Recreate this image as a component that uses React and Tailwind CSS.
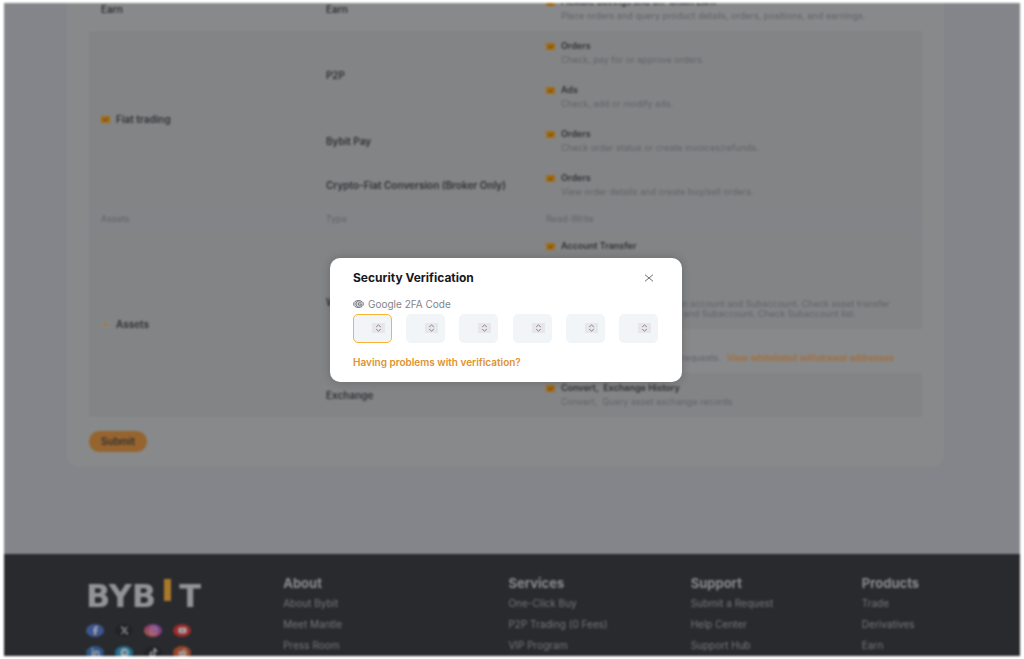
import React from 'react';
import { FaFacebookF, FaXTwitter, FaInstagram, FaYoutube, FaLinkedinIn, FaTelegram, FaTiktok, FaRedditAlien } from 'react-icons/fa6';

const DESC = 'mt-[2px] pl-[15px] text-[9px] leading-[10px] text-[#616369]';

const socials = [
    { name: 'Facebook', Icon: FaFacebookF, bg: 'bg-[#3f558f]' },
    { name: 'X', Icon: FaXTwitter, bg: 'bg-[#222326]' },
    { name: 'Instagram', Icon: FaInstagram, bg: 'bg-linear-to-tr from-[#a5642c] via-[#96386f] to-[#5c3f9c]' },
    { name: 'YouTube', Icon: FaYoutube, bg: 'bg-[#9c2b2b]' },
    { name: 'LinkedIn', Icon: FaLinkedinIn, bg: 'bg-[#2f5484]' },
    { name: 'Telegram', Icon: FaTelegram, bg: 'bg-[#1f6c90]' },
    { name: 'TikTok', Icon: FaTiktok, bg: 'bg-[#222326]' },
    { name: 'Reddit', Icon: FaRedditAlien, bg: 'bg-[#974628]' },
];

const footerColumns = [
    { title: 'About', links: ['About Bybit', 'Meet Mantle', 'Press Room'] },
    { title: 'Services', links: ['One-Click Buy', 'P2P Trading (0 Fees)', 'VIP Program'] },
    { title: 'Support', links: ['Submit a Request', 'Help Center', 'Support Hub'] },
    { title: 'Products', links: ['Trade', 'Derivatives', 'Earn'] },
];

const CheckLabel = ({ children, partial, size = 'text-[10px]' }) => (
    <label className={`flex items-center gap-[6px] leading-[14px] font-semibold text-[#303135] ${size}`}>
        <span className="grid shrink-0">
            <input
                type="checkbox"
                defaultChecked={!partial}
                className={`col-start-1 row-start-1 h-[7px] w-[9px] appearance-none rounded-[1px] ${partial ? 'bg-[#868788]' : 'bg-[#a36c14]'}`}
            />
            <svg viewBox="0 0 9 7" className="pointer-events-none col-start-1 row-start-1 h-[7px] w-[9px]" fill="none">
                {partial ? (
                    <path d="M2 3.5h5" stroke="#b07413" strokeWidth="1.6" />
                ) : (
                    <path d="M2.4 3.4l1.700 1.500 2.600-2.800" stroke="#4c3a1a" strokeWidth="1" />
                )}
            </svg>
        </span>
        {children}
    </label>
);

const Permission = ({ title, children, className = '' }) => (
    <td className={`px-3 pt-2 pb-[10px] align-top whitespace-nowrap ${className}`}>
        <CheckLabel size="text-[9px]">{title}</CheckLabel>
        <p className={`min-h-[10px] ${DESC}`}>{children}</p>
    </td>
);

const TypeCell = ({ children, rowSpan }) => (
    <td rowSpan={rowSpan} className="px-3 text-[10px] leading-[14px] font-semibold text-[#303135]">{children}</td>
);

const PermissionTable = () => (
    <table className="w-full table-fixed border-collapse bg-[#838485] text-left">
        <colgroup>
            <col className="w-[27%]" />
            <col className="w-[220px]" />
            <col />
        </colgroup>
        <tbody>
            <tr className="bg-[#88898a]">
                <TypeCell>Earn</TypeCell>
                <TypeCell>Earn</TypeCell>
                <Permission title="Flexible Savings and On-Chain Earn">
                    Place orders and query product details, orders, positions, and earnings.
                </Permission>
            </tr>
            <tr>
                <td rowSpan={4} className="px-3"><CheckLabel>Fiat trading</CheckLabel></td>
                <TypeCell rowSpan={2}>P2P</TypeCell>
                <Permission title="Orders">Check, pay for or approve orders.</Permission>
            </tr>
            <tr>
                <Permission title="Ads">Check, add or modify ads.</Permission>
            </tr>
            <tr>
                <TypeCell>Bybit Pay</TypeCell>
                <Permission title="Orders">Check order status or create invoices/refunds.</Permission>
            </tr>
            <tr>
                <TypeCell>Crypto-Fiat Conversion (Broker Only)</TypeCell>
                <Permission title="Orders">View order details and create buy/sell orders.</Permission>
            </tr>
            <tr className="h-6 bg-[#838488] text-[9px] leading-[10px] text-[#616369]">
                <th className="px-3 font-normal">Assets</th>
                <th className="px-3 font-normal">Type</th>
                <th className="px-3 font-normal">Read-Write</th>
            </tr>
            <tr>
                <td rowSpan={4} className="px-3"><CheckLabel partial>Assets</CheckLabel></td>
                <TypeCell rowSpan={3}>Wallet</TypeCell>
                <Permission title="Account Transfer" />
            </tr>
            <tr>
                <Permission title="Subaccount Transfer">
                    Asset transfers between Main account and Subaccount. Check asset transfer
                    <br />
                    records of the Main account and Subaccount. Check Subaccount list.
                </Permission>
            </tr>
            <tr>
                <Permission title="Withdrawal" className="bg-[#88898a]">
                    API can process withdrawal requests.
                    <a href="#addresses" className="ml-[6px] font-medium text-[#a8692c]">View whitelisted withdrawal addresses</a>
                </Permission>
            </tr>
            <tr>
                <TypeCell>Exchange</TypeCell>
                <Permission title="Convert,&nbsp; Exchange History">Convert,&nbsp; Query asset exchange records</Permission>
            </tr>
        </tbody>
    </table>
);

const Footer = () => (
    <footer className="grid min-h-0 flex-1 grid-cols-[197fr_225fr_182fr_171fr_158fr] overflow-hidden bg-[#292a2e] pt-[22px] pl-[82px] text-[#8b8c8f]">
        <div>
            <div className="flex items-start font-['DejaVu_Sans'] text-[32px] leading-[40px] font-bold text-[#929396]">
                <span>BYB</span>
                <span className="mx-2 mt-[3px] h-[22px] w-[7px] bg-[#a9782a]" />
                <span>T</span>
            </div>
            <div className="mt-2 flex w-[120px] flex-wrap gap-x-[11px] gap-y-[9px]">
                {socials.map(({ name, Icon, bg }) => (
                    <a
                        key={name}
                        href={`#${name}`}
                        aria-label={name}
                        className={`flex h-[13px] w-[18px] items-center justify-center rounded-[50%] text-[9px] text-[#a5a6a9] ${bg}`}
                    >
                        <Icon />
                    </a>
                ))}
            </div>
        </div>
        {footerColumns.map((col) => (
            <nav key={col.title}>
                <h4 className="text-[13px] leading-[14px] font-bold">{col.title}</h4>
                <ul className="mt-[3px] text-[10px] leading-[21px] text-[#77787c]">
                    {col.links.map((link) => (
                        <li key={link}><a href="#footer">{link}</a></li>
                    ))}
                </ul>
            </nav>
        ))}
    </footer>
);

const CodeInput = ({ index }) => (
    <div
        className={`flex h-[29px] w-[39px] items-center justify-end rounded-[5px] border bg-[#f2f5f8] pr-[6px] ${
            index === 0 ? 'border-[#f9b437]' : 'border-[#f2f5f8]'
        }`}
    >
        <input inputMode="numeric" maxLength={1} aria-label={`Digit ${index + 1}`} className="w-0 flex-1 bg-transparent text-center text-xs outline-none" />
        <svg viewBox="0 0 13 10" className="h-[10px] w-[13px] shrink-0 bg-[#e7e6ea]" fill="none" stroke="#85868d" strokeWidth="1">
            <path d="M4.2 3.9L6.500 2l2.300 1.900M4.200 6.200l2.300 1.900 2.300-1.900" />
        </svg>
    </div>
);

const SecurityDialog = () => (
    <div className="absolute inset-0 flex items-center justify-center pr-3 pb-5">
        <div
            role="dialog"
            aria-labelledby="dialog-title"
            className="w-[352px] max-w-full rounded-[10px] bg-white pt-3 pr-6 pb-[14px] pl-[23px] shadow-[0_0_10px_rgba(0,0,0,0.2)]"
        >
            <div className="flex items-center justify-between">
                <h2 id="dialog-title" className="text-[12px] leading-[16px] font-bold text-[#16171b]">Security Verification</h2>
                <button type="button" aria-label="Close" className="pr-1">
                    <svg viewBox="0 0 10 8" className="h-2 w-[10px]" fill="none" stroke="#6f7078" strokeWidth="1">
                        <path d="M1 .7l8 6.600M9 .7L1 7.300" />
                    </svg>
                </button>
            </div>
            <div className="mt-3 flex items-center gap-1 text-[10px] leading-[12px] text-[#81858c]">
                <svg viewBox="0 0 11 8" className="h-2 w-[11px]" fill="none" stroke="#757981" strokeWidth="1">
                    <ellipse cx="5.5" cy="4" rx="4.900" ry="3.500" fill="#d9dbde" />
                    <path d="M5.800.8C3.900 1.200 3 2.500 3 4s.900 2.800 2.800 3.200" />
                    <path d="M8.300 2.700C7.300 1.900 5.400 2.100 5.200 4c.1 1.900 2.100 2.200 3.100 1.400V4.100H6.500" />
                </svg>
                Google 2FA Code
            </div>
            <div className="mt-1 flex justify-between">
                {[0, 1, 2, 3, 4, 5].map((i) => (
                    <CodeInput key={i} index={i} />
                ))}
            </div>
            <a href="#help" className="mt-[13px] block text-[10px] leading-[12px] font-semibold text-[#e0922f]">
                Having problems with verification?
            </a>
        </div>
    </div>
);

const App = () => (
    <div className="relative h-screen overflow-hidden bg-white px-1 py-[3px] font-[Inter,sans-serif]">
        <div className="flex h-full flex-col overflow-hidden bg-[#84858a] blur-[1px]">
            <main className="-mt-4 mr-[76px] mb-[87px] ml-[63px] shrink-0 rounded-b-xl bg-[#88898a] px-[22px] pb-[15px]">
                <PermissionTable />
                <button type="button" className="mt-[14px] block h-[21px] rounded-full bg-[#96642f] px-3 text-[10px] font-semibold text-[#303135]">
                    Submit
                </button>
            </main>
            <Footer />
        </div>
        <SecurityDialog />
    </div>
);

export default App;
